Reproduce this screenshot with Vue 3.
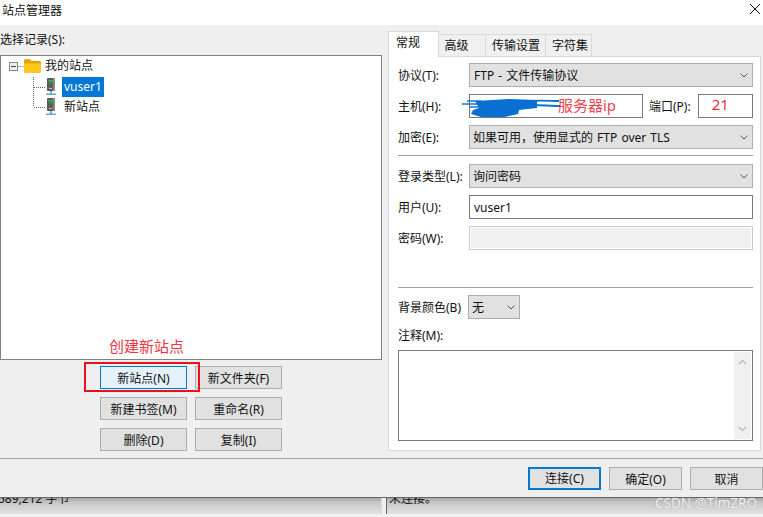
<script setup>
const sideButtons = [
  { text: '新站点(N)', primary: true },
  { text: '新文件夹(F)' },
  { text: '新建书签(M)' },
  { text: '重命名(R)' },
  { text: '删除(D)' },
  { text: '复制(I)' }
]
const tabs = [
  { text: '常规', cls: 't1' },
  { text: '高级', cls: 't2' },
  { text: '传输设置', cls: 't3' },
  { text: '字符集', cls: 't4' }
]
const footerButtons = [
  { text: '连接(C)', primary: true },
  { text: '确定(O)' },
  { text: '取消' }
]
</script>

<template>
  <div class="window">
    <header class="title">
      <span>站点管理器</span>
      <svg class="close" width="12" height="12" viewBox="0 0 12 12"><path d="M1 1L11 11M11 1L1 11" stroke="#111" stroke-width="1" fill="none" /></svg>
    </header>

    <div class="dialog">
      <div class="main">
        <section class="left">
          <div class="left-label">选择记录(S):</div>
          <div class="tree">
            <svg class="tree-lines" width="60" height="70" viewBox="0 0 60 70">
              <path d="M17.5 10.5H24M32.5 21V51M33 31.5H45M33 51.5H45" stroke="#666" stroke-dasharray="1 1" fill="none" />
            </svg>
            <div class="row row-root">
              <span class="minus"><i></i></span>
              <svg class="folder" width="17" height="14" viewBox="0 0 17 14">
                <path d="M0 1.5C0 .7.6.2 1.3.2H6l1.6 1.8h8c.8 0 1.4.6 1.4 1.3V6H0Z" fill="#e2a30c" />
                <path d="M0 4.6h17v8c0 .8-.6 1.3-1.3 1.3H1.3C.6 13.9 0 13.4 0 12.6Z" fill="#ffc81e" />
              </svg>
              <span>我的站点</span>
            </div>
            <div class="row row-site">
              <svg class="server" width="10" height="18" viewBox="0 0 10 18">
                <rect x="1" y="0" width="8" height="13" rx="1" fill="#5c5c5c" />
                <rect x="7" y="0" width="2" height="13" fill="#8a8a8a" />
                <rect x="2.5" y="2" width="5" height="1.6" fill="#3fb34f" />
                <rect x="2.5" y="4.6" width="5" height="1.4" fill="#3a8a45" />
                <rect x="3" y="10" width="3" height="1" fill="#bbb" />
                <rect x="4.2" y="13" width="1.6" height="3" fill="#5b9bd5" />
                <rect x="0" y="15.5" width="10" height="1.5" fill="#6aa5dc" />
              </svg>
              <span class="site-name selected">vuser1</span>
            </div>
            <div class="row row-site">
              <svg class="server" width="10" height="18" viewBox="0 0 10 18">
                <rect x="1" y="0" width="8" height="13" rx="1" fill="#5c5c5c" />
                <rect x="7" y="0" width="2" height="13" fill="#8a8a8a" />
                <rect x="2.5" y="2" width="5" height="1.6" fill="#3fb34f" />
                <rect x="2.5" y="4.6" width="5" height="1.4" fill="#3a8a45" />
                <rect x="3" y="10" width="3" height="1" fill="#bbb" />
                <rect x="4.2" y="13" width="1.6" height="3" fill="#5b9bd5" />
                <rect x="0" y="15.5" width="10" height="1.5" fill="#6aa5dc" />
              </svg>
              <span class="site-name">新站点</span>
            </div>
          </div>
          <div class="side-buttons">
            <span class="note-create">创建新站点</span>
            <span class="note-box"></span>
            <button v-for="b in sideButtons" :key="b.text" class="btn" :class="{ hot: b.primary }">{{ b.text }}</button>
          </div>
        </section>

        <section class="right">
          <nav class="tabs">
            <span v-for="(t, i) in tabs" :key="t.text" class="tab" :class="[t.cls, { active: i === 0 }]">{{ t.text }}</span>
          </nav>
          <div class="panel">
            <div class="form-row r-proto">
              <label>协议(T):</label>
              <div class="select grow"><span class="proto-text">FTP - 文件传输协议</span><svg class="chev" width="8" height="5" viewBox="0 0 8 5"><path d="M.5.5L4 4L7.5.5" stroke="#555" fill="none" /></svg></div>
            </div>
            <div class="form-row r-host">
              <label>主机(H):</label>
              <div class="input host">
                <svg class="scribble" width="100" height="24" viewBox="0 0 100 24">
                  <path d="M1 9H18M6 6H20M8 12H18" stroke="#1177d8" stroke-width="1.6" fill="none" />
                  <path d="M14 6L48 4L76 5V13L58 15L57 19L44 22L20 22L10 19L12 15L18 13Z" fill="#0a6fd3" />
                  <path d="M70 6C80 5 90 6 98 6" stroke="#0a6fd3" stroke-width="1.8" fill="none" />
                  <path d="M70 10C80 10 90 11 99 11" stroke="#0a6fd3" stroke-width="2.2" fill="none" />
                </svg>
                <span class="host-note">服务器ip</span>
              </div>
              <label class="port-label">端口(P):</label>
              <div class="input port"><span class="port-note">21</span></div>
            </div>
            <div class="form-row r-enc">
              <label>加密(E):</label>
              <div class="select grow"><span>如果可用，使用显式的 FTP over TLS</span><svg class="chev" width="8" height="5" viewBox="0 0 8 5"><path d="M.5.5L4 4L7.5.5" stroke="#555" fill="none" /></svg></div>
            </div>
            <hr class="sep sep-a" />
            <div class="form-row r-login">
              <label>登录类型(L):</label>
              <div class="select grow"><span>询问密码</span><svg class="chev" width="8" height="5" viewBox="0 0 8 5"><path d="M.5.5L4 4L7.5.5" stroke="#555" fill="none" /></svg></div>
            </div>
            <div class="form-row r-user">
              <label>用户(U):</label>
              <div class="input grow user">vuser1</div>
            </div>
            <div class="form-row r-pass">
              <label>密码(W):</label>
              <div class="input grow disabled"></div>
            </div>
            <hr class="sep sep-b" />
            <div class="form-row r-bg">
              <label class="bg-label">背景颜色(B)</label>
              <div class="select bg-select"><span>无</span><svg class="chev" width="8" height="5" viewBox="0 0 8 5"><path d="M.5.5L4 4L7.5.5" stroke="#555" fill="none" /></svg></div>
            </div>
            <div class="comment-label">注释(M):</div>
            <div class="textarea">
              <div class="scrollbar">
                <svg width="9" height="6" viewBox="0 0 9 6"><path d="M1 5L4.5 1.5L8 5" stroke="#bdbdbd" stroke-width="1.4" fill="none" /></svg>
                <svg width="9" height="6" viewBox="0 0 9 6"><path d="M1 1L4.5 4.5L8 1" stroke="#bdbdbd" stroke-width="1.4" fill="none" /></svg>
              </div>
            </div>
          </div>
        </section>
      </div>

      <footer class="footer">
        <button v-for="b in footerButtons" :key="b.text" class="btn wide" :class="{ default: b.primary }">{{ b.text }}</button>
      </footer>
    </div>

    <div class="status">
      <div class="status-left"><span>589,212 字节</span></div>
      <div class="status-right"><span>未连接。</span></div>
    </div>
    <span class="watermark">CSDN @TimZRO</span>
  </div>
</template>

<style scoped>
.window {
  width: 763px;
  height: 517px;
  display: flex;
  flex-direction: column;
  background: #f0f0f0;
  overflow: hidden;
  position: relative;
  font: 12px/16px "Noto Sans", "Noto Sans CJK SC", sans-serif;
  color: #111;
}
.title {
  height: 25px;
  flex: none;
  background: #fff;
  display: flex;
  align-items: center;
  justify-content: space-between;
  padding: 0 2px 3px 2px;
  box-sizing: border-box;
  position: relative;
}
.close {
  position: absolute;
  right: 2px;
  top: 3px;
}
.dialog {
  height: 472px;
  flex: none;
  display: flex;
  flex-direction: column;
  background: #efefef;
  box-shadow: 0 1px 0 #666;
  position: relative;
  z-index: 1;
}
.main {
  height: 434px;
  flex: none;
  display: flex;
  gap: 6px;
  box-sizing: border-box;
  border-bottom: 1px solid #a0a0a0;
}
.left {
  width: 382px;
  flex: none;
}
.left-label {
  height: 30px;
  box-sizing: border-box;
  padding-top: 7px;
}
.tree {
  height: 305px;
  box-sizing: border-box;
  border: 1px solid #828282;
  background: #fff;
  position: relative;
}
.tree-lines {
  position: absolute;
  left: 0;
  top: 0;
}
.row {
  height: 20px;
  display: flex;
  align-items: center;
  position: relative;
}
.row-root {
  margin-bottom: 1px;
  padding-left: 8px;
}
.minus {
  width: 9px;
  height: 9px;
  border: 1px solid #8a8a8a;
  background: #eee;
  box-sizing: border-box;
  display: flex;
  align-items: center;
  justify-content: center;
  margin-right: 6px;
}
.minus i {
  width: 5px;
  height: 1px;
  background: #444;
}
.folder {
  margin-right: 4px;
}
.row-site {
  padding-left: 45px;
}
.server {
  margin-right: 6px;
  flex: none;
}
.site-name {
  padding: 2px;
  line-height: 16px;
}
.selected {
  background: #0078d7;
  color: #fff;
}
.side-buttons {
  position: relative;
  display: grid;
  grid-template-columns: 87px 87px;
  grid-auto-rows: 23px;
  gap: 8px;
  margin: 6px 0 0 100px;
}
.note-create {
  position: absolute;
  left: 9px;
  top: -30px;
  font-size: 15px;
  line-height: 20px;
  color: #ee3542;
  white-space: nowrap;
}
.note-box {
  position: absolute;
  left: -16px;
  top: -4px;
  width: 116px;
  height: 30px;
  box-sizing: border-box;
  border: 2px solid #e6121f;
  z-index: 2;
}
.btn {
  margin: 0;
  padding: 2px 0 0;
  background: #e1e1e1;
  border: 1px solid #adadad;
  font: inherit;
  color: #111;
  box-sizing: border-box;
}
.btn.hot {
  background: #e5f1fb;
  border-color: #0078d7;
}
.right {
  width: 373px;
  flex: none;
}
.tabs {
  height: 32px;
  box-sizing: border-box;
  padding-top: 6px;
  display: flex;
  align-items: flex-end;
  position: relative;
  z-index: 1;
  margin-bottom: -1px;
}
.tab {
  height: 23px;
  box-sizing: border-box;
  background: #f0f0f0;
  border: 1px solid #d9d9d9;
  border-left: 0;
  display: flex;
  align-items: center;
  justify-content: center;
}
.tab.active {
  height: 26px;
  background: #fff;
  border-left: 1px solid #d9d9d9;
  border-bottom: 0;
  padding-bottom: 3px;
  justify-content: flex-start;
  padding-left: 7px;
}
.t1 { width: 51px; }
.t2 { width: 47px; padding-right: 11px; }
.t3 { width: 60px; padding-left: 1px; }
.t4 { width: 46px; padding-left: 3px; }
.panel {
  height: 395px;
  box-sizing: border-box;
  background: #fff;
  border: 1px solid #d9d9d9;
  padding: 0 7px 0 9px;
}
.form-row {
  display: flex;
  align-items: center;
  height: 24px;
}
.form-row label {
  width: 71px;
  flex: none;
  white-space: nowrap;
  padding-top: 2px;
}
.r-proto { margin-top: 6px; }
.r-host { margin-top: 7px; }
.r-enc { margin-top: 7px; }
.r-login { margin-top: 8px; }
.r-user { margin-top: 7px; }
.r-pass { margin-top: 7px; }
.r-bg { margin-top: 7px; }
.sep {
  margin: 0;
  border: 0;
  height: 1px;
  background: #a0a0a0;
}
.sep-a { margin-top: 6px; }
.sep-b { margin-top: 37px; }
.select {
  height: 24px;
  box-sizing: border-box;
  background: #e1e1e1;
  border: 1px solid #adadad;
  display: flex;
  align-items: center;
  justify-content: space-between;
  padding: 0 4px 0 3px;
  white-space: nowrap;
  word-spacing: 1px;
}
.select span {
  padding-top: 2px;
}
.proto-text {
  padding-left: 1px;
}
.grow {
  flex: 1;
}
.chev {
  flex: none;
  margin-right: 0;
}
.input {
  height: 24px;
  box-sizing: border-box;
  border: 1px solid #7a7a7a;
  background: #fff;
  position: relative;
  display: flex;
  align-items: center;
}
.host {
  width: 174px;
  flex: none;
}
.scribble {
  position: absolute;
  left: -9px;
  top: 0;
}
.host-note {
  position: absolute;
  left: 88px;
  top: 0;
  font-size: 15px;
  line-height: 20px;
  color: #f0444f;
  white-space: nowrap;
}
.form-row .port-label {
  width: auto;
  margin-left: 6px;
  margin-right: 7px;
}
.port {
  flex: 1;
}
.port-note {
  margin-left: 13px;
  margin-top: -5px;
  font-size: 15px;
  color: #ee2f3c;
}
.user {
  padding: 2px 0 0 4px;
}
.disabled {
  border: 1px solid #cccccc;
  background: #f0f0f0;
  box-shadow: inset 0 0 0 1px #fff;
}
.form-row .bg-label {
  width: 70px;
}
.bg-select {
  width: 52px;
  flex: none;
}
.comment-label {
  margin-top: 9px;
  height: 15px;
}
.textarea {
  height: 91px;
  margin-top: 7px;
  box-sizing: border-box;
  border: 1px solid #7a7a7a;
  background: #fff;
  display: flex;
  justify-content: flex-end;
  padding: 1px;
}
.scrollbar {
  width: 17px;
  background: #f0f0f0;
  display: flex;
  flex-direction: column;
  align-items: center;
  justify-content: space-between;
  padding: 7px 0;
  box-sizing: border-box;
}
.footer {
  height: 38px;
  flex: none;
  display: flex;
  justify-content: flex-end;
  gap: 8px;
  padding: 8px 0 0 0;
  box-sizing: border-box;
}
.btn.wide {
  width: 73px;
  height: 23px;
}
.btn.default {
  border: 2px solid #0078d7;
  padding-top: 1px;
}
.status {
  height: 20px;
  flex: none;
  display: flex;
  position: relative;
  overflow: hidden;
  background: #f0f0f0;
}
.status-left,
.status-right {
  height: 17px;
  background: linear-gradient(#a2a2a2, #c8c8c8 35%, #e2e2e2);
  overflow: hidden;
  position: relative;
}
.status-left {
  width: 381px;
  border-right: 1px solid #d8d8d8;
}
.status-left span {
  position: absolute;
  left: -2px;
  top: -6px;
  white-space: nowrap;
}
.status-right {
  flex: 1;
  margin-left: 4px;
  border-left: 1px solid #666;
}
.status-right span {
  position: absolute;
  left: 2px;
  top: -6px;
  white-space: nowrap;
}
.watermark {
  position: absolute;
  right: 6px;
  top: 494px;
  z-index: 2;
  font-size: 13.5px;
  line-height: 18px;
  color: #f4f4f4;
  text-shadow: 0 0 1px #888;
  white-space: nowrap;
}
</style>

<style>
html, body {
  margin: 0;
  padding: 0;
  background: #f0f0f0;
}
</style>
